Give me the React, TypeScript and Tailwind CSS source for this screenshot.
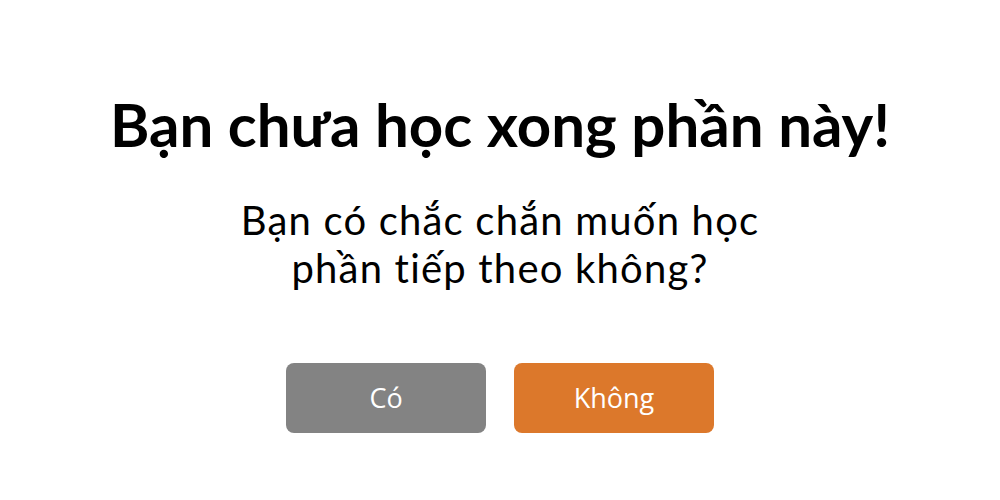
const App = () => {
  return (
    <div className="w-[1000px] h-[500px] bg-white flex flex-col items-center font-['Lato','Noto_Sans',sans-serif] text-black">
      <h1 className="mt-[88px] text-[60px] leading-[72px] font-bold">Bạn chưa học xong phần này!</h1>
      <p className="mt-[36px] text-[40px] leading-[48px] tracking-[1.2px] text-center">
        Bạn có chắc chắn muốn học
        <br />
        phần tiếp theo không?
      </p>
      <div className="mt-[71px] flex gap-[28px] font-['Open_Sans',sans-serif]">
        <button className="w-[200px] h-[70px] rounded-[8px] bg-[#838383] text-white text-[27px]">Có</button>
        <button className="w-[200px] h-[70px] rounded-[8px] bg-[#dc782b] text-white text-[27px]">Không</button>
      </div>
    </div>
  );
};

export default App;
